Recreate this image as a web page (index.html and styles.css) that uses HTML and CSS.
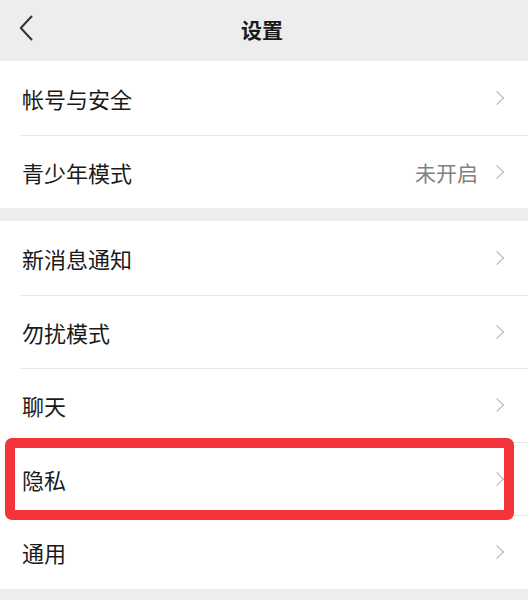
FILE: index.html
```html
<!DOCTYPE html>
<html lang="zh-CN">
<head>
    <meta charset="UTF-8">
    <meta name="viewport" content="width=device-width, initial-scale=1.0">
    <title>设置</title>
    <link rel="stylesheet" href="styles.css">
</head>
<body>
    <div class="navbar">
        <span class="back">
            <svg width="14" height="26" viewBox="0 0 14 26">
                <path d="M12.5 1.5 L1.8 13 L12.5 24.5" fill="none" stroke="#333" stroke-width="2" stroke-linecap="round" stroke-linejoin="round"/>
            </svg>
        </span>
        <h1>设置</h1>
    </div>

    <div class="group">
        <div class="cell">
            <div class="cell-body">
                <span class="label">帐号与安全</span>
                <span class="arrow"></span>
            </div>
        </div>
        <div class="cell">
            <div class="cell-body">
                <span class="label">青少年模式</span>
                <span class="value">未开启</span>
                <span class="arrow"></span>
            </div>
        </div>
    </div>

    <div class="group">
        <div class="cell">
            <div class="cell-body">
                <span class="label">新消息通知</span>
                <span class="arrow"></span>
            </div>
        </div>
        <div class="cell">
            <div class="cell-body">
                <span class="label">勿扰模式</span>
                <span class="arrow"></span>
            </div>
        </div>
        <div class="cell">
            <div class="cell-body">
                <span class="label">聊天</span>
                <span class="arrow"></span>
            </div>
        </div>
        <div class="cell highlight">
            <div class="cell-body">
                <span class="label">隐私</span>
                <span class="arrow"></span>
            </div>
        </div>
        <div class="cell">
            <div class="cell-body">
                <span class="label">通用</span>
                <span class="arrow"></span>
            </div>
        </div>
    </div>
</body>
</html>
```

FILE: styles.css
```css
body {
    margin: 0;
    padding: 0;
    background-color: #ededed;
    font-family: "Noto Sans CJK SC", "Noto Sans", sans-serif;
    color: #1a1a1a;
}
.navbar {
    height: 61px;
    display: flex;
    align-items: center;
    justify-content: center;
    position: relative;
}
.navbar h1 {
    margin: -3px 0 0 -4px;
    font-size: 21px;
    font-weight: 600;
    color: #1a1a1a;
}
.back {
    position: absolute;
    left: 19px;
    top: 15px;
    display: flex;
}
.group {
    background: #fff;
    margin-bottom: 13px;
}
.cell {
    padding-left: 21px;
    position: relative;
}
.cell-body {
    height: 73.5px;
    display: flex;
    align-items: center;
    padding-right: 24px;
    border-top: 1px solid #e6e6e6;
    box-sizing: border-box;
}
.cell:first-child .cell-body {
    border-top: none;
}
.label {
    flex: 1;
    font-size: 22px;
    padding-left: 1px;
}
.value {
    font-size: 21px;
    color: #808080;
    margin-right: 14px;
}
.arrow {
    width: 9px;
    height: 9px;
    border-top: 1.6px solid #b2b2b2;
    border-right: 1.6px solid #b2b2b2;
    transform: rotate(45deg);
    margin-right: 2px;
}
.highlight::after {
    content: "";
    position: absolute;
    top: -4px;
    left: 5px;
    right: 14px;
    bottom: -5px;
    border: 10px solid #f4333a;
    border-radius: 7px;
    z-index: 2;
}
```
